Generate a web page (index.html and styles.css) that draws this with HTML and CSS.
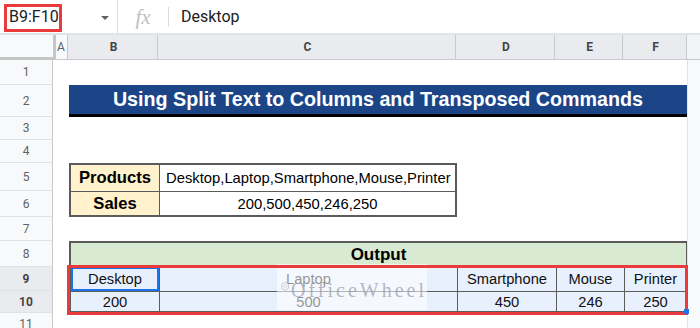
FILE: index.html
```html
<!DOCTYPE html>
<html>
<head>
    <title>Split Text to Columns</title>
    <link rel="stylesheet" href="styles.css">
</head>
<body>
    <div class="fbar">
        <div class="namebox">
            <span class="range">B9:F10</span>
            <span class="caret"></span>
            <div class="mark-name"></div>
        </div>
        <div class="fx">fx</div>
        <div class="formula">Desktop</div>
    </div>

    <div class="sheet">
        <!-- column headers -->
        <div class="corner"></div>
        <div class="colhead">A</div>
        <div class="colhead sel">B</div>
        <div class="colhead sel">C</div>
        <div class="colhead sel">D</div>
        <div class="colhead sel">E</div>
        <div class="colhead sel">F</div>
        <div class="colhead rest"></div>

        <!-- row headers -->
        <div class="rowhead r1">1</div>
        <div class="rowhead r2">2</div>
        <div class="rowhead r3">3</div>
        <div class="rowhead r4">4</div>
        <div class="rowhead r5">5</div>
        <div class="rowhead r6">6</div>
        <div class="rowhead r7">7</div>
        <div class="rowhead r8">8</div>
        <div class="rowhead r9 sel">9</div>
        <div class="rowhead r10 sel">10</div>
        <div class="rowhead r11">11</div>

        <div class="rest-col"></div>

        <div class="title">Using Split Text to Columns and Transposed Commands</div>

        <div class="products">
            <div class="label">Products</div>
            <div class="value">Desktop,Laptop,Smartphone,Mouse,Printer</div>
            <div class="label second">Sales</div>
            <div class="value second center">200,500,450,246,250</div>
        </div>

        <div class="output">
            <div class="out-head">Output</div>
            <div class="cell first active">Desktop</div>
            <div class="cell">Laptop</div>
            <div class="cell">Smartphone</div>
            <div class="cell">Mouse</div>
            <div class="cell">Printer</div>
            <div class="cell first low">200</div>
            <div class="cell low">500</div>
            <div class="cell low">450</div>
            <div class="cell low">246</div>
            <div class="cell low">250</div>

            <div class="watermark">
                <svg width="22" height="30" viewBox="0 0 22 30">
                    <path d="M11 2 L20 7 L20 19 L11 24 L2 19 L2 7 Z" fill="none" stroke="#b9bcc2" stroke-width="2"/>
                    <path d="M11 8 L15 10.5 L15 15.5 L11 18 L7 15.5 L7 10.5 Z" fill="none" stroke="#c4c7cc" stroke-width="1.6"/>
                </svg>
                <span>OfficeWheel</span>
            </div>
            <div class="mark-range"></div>
            <div class="handle"></div>
        </div>
    </div>
</body>
</html>
```

FILE: styles.css
```css
/* Page */
body {
    margin: 0;
    width: 700px;
    height: 328px;
    overflow: hidden;
    background: #fff;
    font-family: "Liberation Sans", Arial, sans-serif;
}

/* Formula bar */
.fbar {
    height: 33px;
    display: flex;
    align-items: center;
    border-bottom: 2px solid #e1e3e6;
    font-family: Roboto, "Liberation Sans", sans-serif;
}
.namebox {
    position: relative;
    width: 118px;
    height: 100%;
    display: flex;
    align-items: center;
    box-sizing: border-box;
    padding-left: 9px;
    border-right: 1px solid #dadce0;
}
.range {
    font-size: 16px;
    color: #202124;
    width: 92px;
}
.caret {
    width: 0;
    height: 0;
    border-left: 4px solid transparent;
    border-right: 4px solid transparent;
    border-top: 4px solid #5f6368;
    margin-top: 2px;
}
.mark-name {
    position: absolute;
    left: 4px;
    top: 4px;
    width: 58px;
    height: 28px;
    box-sizing: border-box;
    border: 3px solid #ea3a3c;
}
.fx {
    width: 50px;
    height: 20px;
    line-height: 20px;
    text-align: center;
    font-family: "Liberation Serif", serif;
    font-style: italic;
    font-size: 21px;
    color: #bdc1c6;
    border-right: 1px solid #dadce0;
}
.formula {
    padding-left: 12px;
    font-size: 16px;
    color: #202124;
}

/* Sheet grid */
.sheet {
    display: grid;
    grid-template-columns: 53px 15px 90px 298px 99px 68px 64px 13px;
    grid-template-rows: 25px 25px 32px 23px 23px 28px 26px 24px 26px 24px 22px 23px;
}
.corner {
    background: #f8f9fa;
    border-right: 3px solid #c4c7c5;
    border-bottom: 3px solid #c4c7c5;
    margin-right: -3px;
    position: relative;
    z-index: 1;
}
.colhead {
    background: #f8f9fa;
    border-right: 1px solid #c7c9cc;
    border-bottom: 1px solid #c7c9cc;
    font-family: Roboto, sans-serif;
    font-size: 12px;
    color: #5f6368;
    display: flex;
    align-items: center;
    justify-content: center;
    padding-left: 2px;
}
.colhead.sel {
    background: #e9ebee;
    color: #444;
    font-weight: bold;
}
.colhead.rest {
    background: #f3f4f6;
    border-right: none;
}
.rowhead {
    grid-column: 1;
    background: #f8f9fa;
    border-right: 1px solid #c7c9cc;
    border-bottom: 1px solid #dfe1e4;
    font-family: Roboto, sans-serif;
    font-size: 12px;
    color: #5f6368;
    display: flex;
    align-items: center;
    justify-content: center;
}
.rowhead.sel {
    background: #e9ebee;
    color: #444;
    font-weight: bold;
}
.r1 { grid-row: 2; }
.r2 { grid-row: 3; }
.r3 { grid-row: 4; }
.r4 { grid-row: 5; }
.r5 { grid-row: 6; }
.r6 { grid-row: 7; }
.r7 { grid-row: 8; }
.r8 { grid-row: 9; }
.r9 { grid-row: 10; }
.r10 { grid-row: 11; }
.r11 { grid-row: 12; }

.rest-col {
    grid-column: 8;
    grid-row: 2 / 13;
    background: #f8f9fa;
    border-left: 1px solid #e3e5e8;
}

/* Title banner */
.title {
    grid-column: 3 / 8;
    grid-row: 3;
    margin-left: 1px;
    background: #1c4587;
    border-bottom: 3px solid #000;
    color: #fff;
    font-weight: bold;
    font-size: 19.7px;
    display: flex;
    align-items: center;
    justify-content: center;
}

/* Products table */
.products {
    grid-column: 3 / 5;
    grid-row: 6 / 8;
    margin-left: 1px;
    margin-right: -1px;
    display: grid;
    grid-template-columns: 88px 1fr;
    grid-template-rows: 26px 1fr;
    border: 2px solid #5b5b5b;
}
.products .label {
    background: #fff2cc;
    font-weight: bold;
    font-size: 16.6px;
    display: flex;
    align-items: center;
    justify-content: center;
}
.products .value {
    border-left: 1px solid #5b5b5b;
    font-size: 14.8px;
    display: flex;
    align-items: center;
    padding-left: 6px;
}
.products .second {
    border-top: 1px solid #5b5b5b;
}
.products .center {
    justify-content: center;
    padding-left: 0;
}

/* Output block */
.output {
    position: relative;
    grid-column: 3 / 8;
    grid-row: 9 / 12;
    margin-left: 1px;
    display: grid;
    grid-template-columns: 88px 298px 99px 68px 1fr;
    grid-template-rows: 24px 24px 1fr;
    border: 2px solid #5b5b5b;
    border-right-width: 1px;
}
.out-head {
    grid-column: 1 / 6;
    background: #d9ead3;
    font-weight: bold;
    font-size: 17px;
    display: flex;
    align-items: center;
    justify-content: center;
    border-bottom: 1px solid #5b5b5b;
}
.cell {
    background: #e8f0fe;
    border-left: 1px solid #5b5b5b;
    font-size: 14.7px;
    color: #111;
    display: flex;
    align-items: center;
    justify-content: center;
}
.cell.first {
    border-left: none;
}
.cell.low {
    border-top: 1px solid #5b5b5b;
}
.cell.active {
    box-shadow: inset 0 0 0 2px #1a73e8;
}
.watermark {
    position: absolute;
    left: 206px;
    top: 21px;
    width: 150px;
    height: 46px;
    background: rgba(255, 255, 255, 0.55);
    display: flex;
    align-items: center;
    gap: 2px;
    padding-left: 4px;
    box-sizing: border-box;
}
.watermark span {
    font-family: "Liberation Serif", serif;
    font-size: 20px;
    letter-spacing: 3px;
    color: rgba(150, 155, 162, 0.7);
    margin-top: 6px;
}
.mark-range {
    position: absolute;
    left: -4px;
    top: 22px;
    right: -2px;
    bottom: -4px;
    border: 3px solid #ea3a3c;
}
.handle {
    position: absolute;
    right: -3px;
    bottom: -3px;
    width: 5px;
    height: 5px;
    background: #1a73e8;
}
```
